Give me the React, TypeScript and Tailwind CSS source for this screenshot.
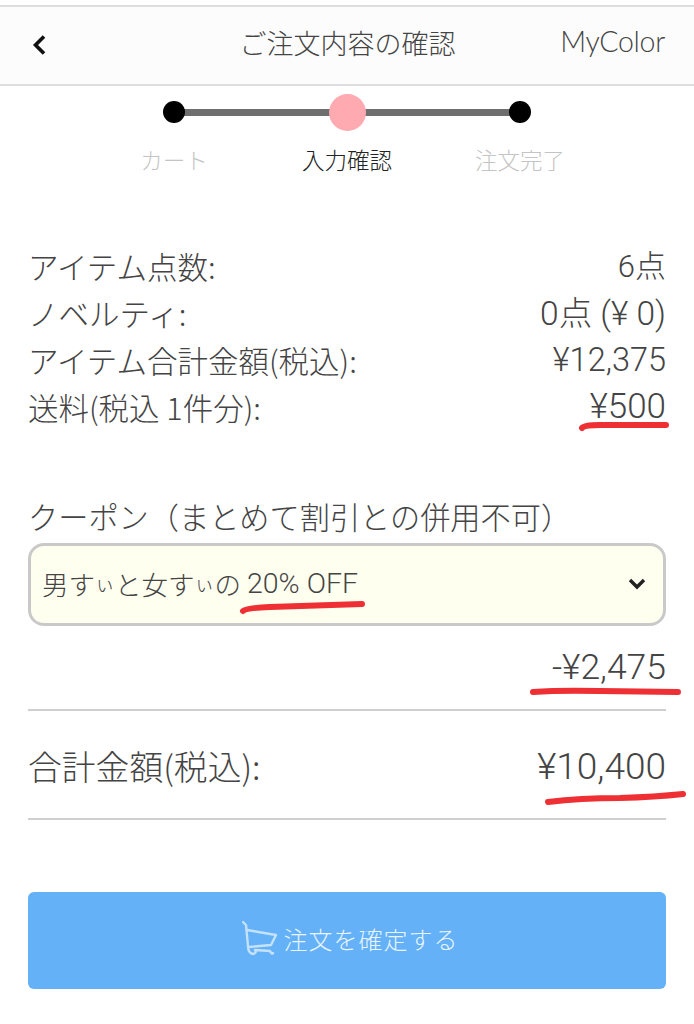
import React from 'react';

const font = "font-['Noto_Sans_CJK_JP','Noto_Sans',sans-serif]";
const latin = "font-['Roboto','Noto_Sans_CJK_JP',sans-serif]";

const rows = [
  { label: 'アイテム点数:', value: '6点', size: 'text-[31px]' },
  { label: 'ノベルティ:', value: '0点 (¥ 0)', size: 'text-[33.5px]' },
  { label: 'アイテム合計金額(税込):', value: '¥12,375', size: 'text-[32.5px]' },
  { label: '送料(税込 1件分):', value: '¥500', size: 'text-[35px]' },
];

const Stepper: React.FC = () => (
  <div className="pt-[7px]">
    <div className="relative mx-auto flex h-[38px] w-[368px] items-center justify-between">
      <div className="absolute left-[10px] right-[10px] top-[16px] h-[7px] bg-[#6e6e6e]" />
      <div className="relative h-[22px] w-[22px] rounded-full bg-black" />
      <div className="relative h-[37px] w-[37px] rounded-full bg-[#ffa9b0]" />
      <div className="relative h-[22px] w-[22px] rounded-full bg-black" />
    </div>
    <div className="mx-auto mt-[12px] flex w-[436px] justify-between text-[22.5px] leading-[32px]">
      <span className="w-[90px] text-center text-[#c4c4c4]">カート</span>
      <span className="w-[90px] text-center text-[#222]">入力確認</span>
      <span className="w-[90px] text-center text-[#c4c4c4]">注文完了</span>
    </div>
  </div>
);

export default function App() {
  return (
    <div className={`${font} relative h-[1024px] w-[694px] overflow-hidden bg-white font-light text-[#444]`}>
      <header className="mt-[5px] grid h-[81px] grid-cols-[1fr_auto_1fr] items-center border-y-2 border-y-[#dedede] bg-[#fcfcfc] pl-[30px] pr-[29px]">
        <svg className="mb-[2px]" width="18" height="22" viewBox="0 0 18 22" fill="none" stroke="#111" strokeWidth="3.6">
          <path d="M14 2.5 L5.5 11 L14 19.5" />
        </svg>
        <h1 className="mb-[6px] text-[27px] font-light leading-none text-[#444]">ご注文内容の確認</h1>
        <span className="mb-[8px] text-right font-['Lato',sans-serif] text-[28.5px] font-light leading-none tracking-[-0.3px] text-[#444]">MyColor</span>
      </header>

      <Stepper />

      <section className="mt-[69px] px-[28px]">
        {rows.map((r) => (
          <div key={r.label} className="flex h-[46.7px] items-center justify-between text-[30.5px]">
            <span>{r.label}</span>
            <span className={`${latin} ${r.size}`}>{r.value}</span>
          </div>
        ))}
      </section>

      <section className="mt-[63px] px-[28px]">
        <div className="text-[30.2px] leading-[44px]">クーポン（まとめて割引との併用不可）</div>
        <div className="mt-[5px] flex h-[83px] items-center justify-between rounded-[16px] border-[3px] border-[#c9c9c9] bg-[#fffff0] pl-[11px] pr-[16px]">
          <span className="flex items-center text-[26.5px]">
            男す<span className="text-[20px]">ぃ</span>と女す<span className="text-[20px]">ぃ</span>の
            <span className={`${latin} ml-[6px] text-[28.5px]`}>20% OFF</span>
          </span>
          <svg width="20" height="14" viewBox="0 0 20 14" fill="none" stroke="#222" strokeWidth="3.4">
            <path d="M3 3 L10 10 L17 3" />
          </svg>
        </div>
        <div className={`${latin} mt-[16px] text-right text-[35.5px] leading-[50px]`}>-¥2,475</div>
        <div className="mt-[17px] border-t-2 border-[#cfcfcf]" />
        <div className="flex h-[107px] items-center justify-between pt-[4px]">
          <span className="text-[33.8px]">合計金額(税込):</span>
          <span className={`${latin} text-[37px]`}>¥10,400</span>
        </div>
        <div className="border-t-2 border-[#cfcfcf]" />
        <button className="mt-[72px] flex h-[97px] w-full items-center justify-center rounded-[6px] bg-[#64b1f8] pb-[3px] pl-[6px] text-[24px] text-[#e8f4ff]">
          <svg width="36" height="38" viewBox="0 0 36 38" fill="none" stroke="#c4e2fc" strokeWidth="2.4" strokeLinecap="round" strokeLinejoin="round">
            <path d="M1 2 L4 5 L6 26 Q6 33 11 34 Q15 33 13 30 L28 31 Q30 35 31 33" />
            <path d="M5 10 L34 15 L29 25 L7 27" />
          </svg>
          <span className="ml-[6px] tracking-[1px]">注文を確定する</span>
        </button>
      </section>

      {/* hand-drawn red marks on top of the screenshot */}
      <svg className="absolute left-0 top-0" width="694" height="1024" fill="none" stroke="#ee2f33" strokeWidth="6" strokeLinecap="round">
        <path d="M582 428 Q584 425 600 425 L666 425" />
        <path d="M243 611 Q246 608 270 607 L362 604" />
        <path d="M533 692 Q560 690 600 691 L678 692" />
        <path d="M548 802 Q580 798 620 798 Q655 797 683 794" />
      </svg>
    </div>
  );
}
